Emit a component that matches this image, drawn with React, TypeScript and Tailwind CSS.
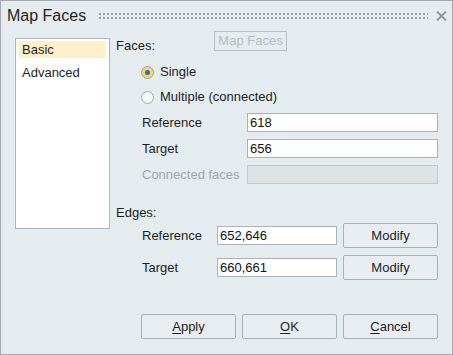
import React from 'react'

const font = "font-['Liberation_Sans',Arial,sans-serif]"

function Radio({ checked, label }: { checked?: boolean; label: string }) {
  return (
    <div className="flex h-[20px] items-center gap-[6px] pl-[25px]">
      <span
        className={
          checked
            ? 'flex h-[13px] w-[13px] items-center justify-center rounded-full border border-[#9aa3a8] bg-[#f6d36a]'
            : 'flex h-[13px] w-[13px] items-center justify-center rounded-full border border-[#a3abb0] bg-[#f7f9fa]'
        }
      >
        {checked && <span className="h-[5px] w-[5px] rounded-full bg-[#1f6fd1]" />}
      </span>
      <span className="text-[13px] leading-[16px] text-[#1e1e1e]">{label}</span>
    </div>
  )
}

function Field({ label, value, disabled }: { label: string; value?: string; disabled?: boolean }) {
  return (
    <div className="mt-[7px] flex h-[19px] items-center pl-[26px]">
      <span className={disabled ? 'w-[105px] text-[13px] leading-[16px] text-[#9ea6ab]' : 'w-[105px] text-[13px] leading-[16px] text-[#1e1e1e]'}>
        {label}
      </span>
      <div
        className={
          disabled
            ? 'h-[19px] w-[191px] border border-[#c3c9cc] bg-[#dee3e6]'
            : 'flex h-[19px] w-[191px] items-center border border-[#abb3b8] bg-white pl-[2px] text-[13px] text-[#111]'
        }
      >
        {value}
      </div>
    </div>
  )
}

function Btn({ children, className = '' }: { children: React.ReactNode; className?: string }) {
  return (
    <div
      className={`flex h-[25px] w-[95px] items-center justify-center rounded-[2px] border border-[#a9b1b6] bg-[#e7edf0] text-[13px] text-[#1e1e1e] ${className}`}
    >
      {children}
    </div>
  )
}

function EdgeRow({ label, value }: { label: string; value: string }) {
  return (
    <div className="flex h-[25px] items-center pl-[26px]">
      <span className="w-[75px] text-[13px] leading-[16px] text-[#1e1e1e]">{label}</span>
      <div className="flex h-[19px] w-[120px] items-center border border-[#abb3b8] bg-white pl-[2px] text-[13px] text-[#111]">
        {value}
      </div>
      <Btn className="ml-[6px]">Modify</Btn>
    </div>
  )
}

export default function App() {
  return (
    <div className={`${font} flex h-[355px] w-[453px] flex-col border border-[#a3abb0] bg-[#e5ecef]`}>
      <div className="flex h-[30px] shrink-0 items-center pl-[6px] pr-[5px]">
        <span className="text-[16px] leading-[20px] text-[#1f1f1f]">Map Faces</span>
        <svg className="ml-[13px] h-[6px] flex-1" aria-hidden="true">
          <defs>
            <pattern id="grip" width="4" height="4" patternUnits="userSpaceOnUse">
              <rect width="2" height="2" fill="#9ba1a5" />
            </pattern>
          </defs>
          <rect width="100%" height="6" fill="url(#grip)" />
        </svg>
        <svg className="ml-[8px]" width="11" height="10" viewBox="0 0 11 10" aria-hidden="true">
          <path d="M1 0.5 L10 9.5 M10 0.5 L1 9.5" stroke="#8f969a" strokeWidth="1.8" />
        </svg>
      </div>

      <div className="flex pl-[14px] pr-[14px]">
        <div className="mt-[7px] flex h-[191px] w-[95px] shrink-0 flex-col gap-[6px] border border-[#b0b7bb] bg-white px-[3px] pt-[2px]">
          <div className="flex h-[17px] items-center bg-[#fdf1cc] pl-[3px] text-[13px] text-[#1e1e1e]">Basic</div>
          <div className="flex h-[17px] items-center pl-[3px] text-[13px] text-[#1e1e1e]">Advanced</div>
        </div>

        <div className="ml-[6px] flex flex-1 flex-col">
          <div className="flex">
            <span className="mt-[7px] w-[98px] text-[13px] leading-[16px] text-[#1e1e1e]">Faces:</span>
            <div className="flex h-[20px] w-[73px] items-center justify-center border border-[#b9c0c4] text-[13px] text-[#b6bdc1]">
              Map Faces
            </div>
          </div>
          <div className="mt-[8px]">
            <Radio checked label="Single" />
          </div>
          <div className="mt-[5px]">
            <Radio label="Multiple (connected)" />
          </div>
          <div className="mt-[-1px]">
            <Field label="Reference" value="618" />
            <Field label="Target" value="656" />
            <Field label="Connected faces" disabled />
          </div>

          <span className="mt-[21px] text-[13px] leading-[16px] text-[#1e1e1e]">Edges:</span>
          <div className="mt-[2px] flex flex-col gap-[7px]">
            <EdgeRow label="Reference" value="652,646" />
            <EdgeRow label="Target" value="660,661" />
          </div>

          <div className="mt-[34px] flex justify-end gap-[6px]">
            <Btn>
              <span className="underline underline-offset-2">A</span>pply
            </Btn>
            <Btn>
              <span className="underline underline-offset-2">O</span>K
            </Btn>
            <Btn>
              <span className="underline underline-offset-2">C</span>ancel
            </Btn>
          </div>
        </div>
      </div>
    </div>
  )
}
